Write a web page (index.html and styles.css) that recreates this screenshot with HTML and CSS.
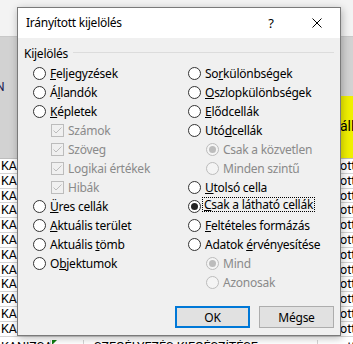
FILE: index.html
```html
<!DOCTYPE html>
<html lang="hu">
<head>
  <meta charset="UTF-8" />
  <title>Irányított kijelölés</title>
  <link rel="stylesheet" href="styles.css">
</head>
<body>
<div class="sheet">
  <div class="ribbon"></div>
  <div class="heading"><span class="heading-left">N</span></div>
  <div class="title-row">
    <span class="title-left"></span>
    <span class="title-right">áll</span>
  </div>
  <div class="row"><span class="c-a">KAN</span><span class="c-b"></span><span class="c-c"></span><span class="c-d">ott</span></div>
  <div class="row"><span class="c-a">KAN</span><span class="c-b"></span><span class="c-c"></span><span class="c-d">ott</span></div>
  <div class="row"><span class="c-a">KAN</span><span class="c-b"></span><span class="c-c"></span><span class="c-d">ott</span></div>
  <div class="row"><span class="c-a">KAN</span><span class="c-b"></span><span class="c-c"></span><span class="c-d">ott</span></div>
  <div class="row"><span class="c-a">KAN</span><span class="c-b"></span><span class="c-c"></span><span class="c-d">ott</span></div>
  <div class="row"><span class="c-a">KAN</span><span class="c-b"></span><span class="c-c"></span><span class="c-d">ott</span></div>
  <div class="row"><span class="c-a">KAN</span><span class="c-b"></span><span class="c-c"></span><span class="c-d">ott</span></div>
  <div class="row"><span class="c-a">KAN</span><span class="c-b"></span><span class="c-c"></span><span class="c-d">ott</span></div>
  <div class="row"><span class="c-a">KAN</span><span class="c-b"></span><span class="c-c"></span><span class="c-d">ott</span></div>
  <div class="row"><span class="c-a">KAN</span><span class="c-b"></span><span class="c-c"></span><span class="c-d">ott</span></div>
  <div class="row"><span class="c-a">KAN</span><span class="c-b"></span><span class="c-c"></span><span class="c-d">ott</span></div>
  <div class="row"><span class="c-a">KAN</span><span class="c-b"></span><span class="c-c"></span><span class="c-d">ott</span></div>
  <div class="row row-last">
    <span class="c-a">KANIZSAI</span>
    <span class="c-b"><span class="flag"></span></span>
    <span class="c-c">SZEGÉLYEZÉS KIEGÉSZÍTÉSE</span>
    <span class="c-d">ott</span>
  </div>
</div>

<div class="dialog" role="dialog" aria-label="Irányított kijelölés">
  <div class="titlebar">
    <span class="title">Irányított kijelölés</span>
    <span class="help">?</span>
    <span class="close">
      <svg width="10" height="10" viewBox="0 0 10 10"><path d="M0.5 0.5 L9.5 9.5 M9.5 0.5 L0.5 9.5" stroke="#000" stroke-width="1" fill="none"/></svg>
    </span>
  </div>
  <div class="dialog-body">
    <div class="legend"><span>Kijelölés</span></div>
    <div class="options">
      <div class="col col-left">
        <div class="opt"><span class="radio"></span><span><u>F</u>eljegyzések</span></div>
        <div class="opt"><span class="radio"></span><span>Á<u>l</u>landók</span></div>
        <div class="opt"><span class="radio"></span><span><u>K</u>épletek</span></div>
        <div class="opt sub disabled"><span class="check"><svg width="11" height="11" viewBox="0 0 11 11"><path d="M1.5 5.5 L4 8 L9.5 2.5" stroke="#bcbcbc" fill="none"/></svg></span><span>Számok</span></div>
        <div class="opt sub disabled"><span class="check"><svg width="11" height="11" viewBox="0 0 11 11"><path d="M1.5 5.5 L4 8 L9.5 2.5" stroke="#bcbcbc" fill="none"/></svg></span><span>Szöveg</span></div>
        <div class="opt sub disabled"><span class="check"><svg width="11" height="11" viewBox="0 0 11 11"><path d="M1.5 5.5 L4 8 L9.5 2.5" stroke="#bcbcbc" fill="none"/></svg></span><span>Logikai értékek</span></div>
        <div class="opt sub disabled"><span class="check"><svg width="11" height="11" viewBox="0 0 11 11"><path d="M1.5 5.5 L4 8 L9.5 2.5" stroke="#bcbcbc" fill="none"/></svg></span><span>Hibák</span></div>
        <div class="opt"><span class="radio"></span><span><u>Ü</u>res cellák</span></div>
        <div class="opt"><span class="radio"></span><span><u>A</u>ktuális terület</span></div>
        <div class="opt"><span class="radio"></span><span>Aktuális <u>t</u>ömb</span></div>
        <div class="opt"><span class="radio"></span><span>O<u>b</u>jektumok</span></div>
      </div>
      <div class="col">
        <div class="opt"><span class="radio"></span><span>So<u>r</u>különbségek</span></div>
        <div class="opt"><span class="radio"></span><span><u>O</u>szlopkülönbségek</span></div>
        <div class="opt"><span class="radio"></span><span><u>E</u>lődcellák</span></div>
        <div class="opt"><span class="radio"></span><span>Utó<u>d</u>cellák</span></div>
        <div class="opt sub disabled"><span class="radio checked"></span><span>Csak a közvetlen</span></div>
        <div class="opt sub disabled"><span class="radio"></span><span>Minden szintű</span></div>
        <div class="opt"><span class="radio"></span><span><u>U</u>tolsó cella</span></div>
        <div class="opt"><span class="radio checked"></span><span class="focus"><u>C</u>sak a látható cellák</span></div>
        <div class="opt"><span class="radio"></span><span><u>F</u>eltételes formázás</span></div>
        <div class="opt"><span class="radio"></span><span>Adatok <u>é</u>rvényesítése</span></div>
        <div class="opt sub disabled"><span class="radio checked"></span><span>Mind</span></div>
        <div class="opt sub disabled"><span class="radio"></span><span>Azonosak</span></div>
      </div>
    </div>
    <div class="buttons">
      <button class="btn btn-default">OK</button>
      <button class="btn">Mégse</button>
    </div>
  </div>
</div>
</body>
</html>
```

FILE: styles.css
```css
* {
  box-sizing: border-box;
}
html, body {
  margin: 0;
}
body {
  width: 353px;
  height: 344px;
  overflow: hidden;
  position: relative;
  background: #fff;
  font-family: Roboto, sans-serif;
}

/* spreadsheet behind the dialog */
.sheet {
  display: flex;
  flex-direction: column;
}
.ribbon {
  height: 37px;
  background: #f3f3f3;
  border-bottom: 1px solid #c8c8c8;
}
.heading {
  height: 59px;
  background: #d2d2d2;
  display: flex;
  align-items: flex-end;
}
.heading-left {
  font-size: 12px;
  color: #1a1a50;
  margin-left: -4px;
  padding-bottom: 2px;
}
.title-row {
  height: 63px;
  display: flex;
  justify-content: space-between;
  border-bottom: 1px solid #bdbdbd;
}
.title-left {
  width: 50px;
  background: #d2d2d2;
}
.title-right {
  width: 36px;
  background: #f0f000;
  padding-left: 23px;
  padding-bottom: 2px;
  display: flex;
  align-items: center;
  font-size: 14px;
  white-space: nowrap;
  overflow: hidden;
  color: #000;
}
.row {
  height: 14.8px;
  display: flex;
  border-bottom: 1px solid #d4d4d4;
  font-size: 12.5px;
  line-height: 14px;
  color: #000;
}
.row span {
  white-space: nowrap;
  overflow: hidden;
}
.c-a {
  width: 50px;
  padding-left: 1px;
}
.c-b {
  width: 33px;
  border-left: 1px solid #d4d4d4;
  position: relative;
}
.c-c {
  flex: 1;
  border-left: 1px solid #d4d4d4;
  padding-left: 10px;
}
.c-d {
  width: 36px;
  border-left: 1px solid #d4d4d4;
  padding-left: 22px;
}
.row-last {
  height: 16px;
  padding-top: 3px;
}
.flag {
  position: absolute;
  left: 1px;
  top: 0;
  width: 0;
  height: 0;
  border-top: 5px solid #107c10;
  border-right: 5px solid transparent;
}

/* dialog */
.dialog {
  position: absolute;
  left: 17px;
  top: 7px;
  width: 324px;
  height: 329px;
  background: #f0f0f0;
  border: 1px solid #7a7a7a;
  box-shadow: 1px 2px 8px rgba(0, 0, 0, 0.28);
  display: flex;
  flex-direction: column;
  font-family: "Noto Sans", sans-serif;
  font-size: 12px;
  letter-spacing: -0.25px;
  color: #000;
}
.titlebar {
  height: 30px;
  background: #fff;
  display: flex;
  align-items: center;
}
.title {
  flex: 1;
  padding-left: 8px;
  padding-bottom: 1px;
}
.help, .close {
  width: 46px;
  height: 30px;
  display: flex;
  align-items: center;
  justify-content: center;
}
.help {
  font-size: 13px;
}
.dialog-body {
  flex: 1;
  display: flex;
  flex-direction: column;
  padding: 7px 6px 7px 6px;
}
.legend {
  height: 16px;
  display: flex;
  align-items: center;
  gap: 5px;
}
.legend::after {
  content: "";
  flex: 1;
  border-top: 1px solid #dcdcdc;
  margin-top: -1px;
}
.options {
  display: flex;
  margin-top: 2.5px;
  padding-left: 9px;
}
.col {
  display: flex;
  flex-direction: column;
}
.col-left {
  width: 155px;
}
.opt {
  height: 19px;
  display: flex;
  align-items: center;
  gap: 4px;
  white-space: nowrap;
}
.opt u {
  text-underline-offset: 1px;
}
.opt.sub {
  padding-left: 18px;
}
.opt.disabled {
  color: #8a8a8a;
}
.radio {
  flex: none;
  width: 13px;
  height: 13px;
  border: 1px solid #333;
  border-radius: 50%;
  background: #fff;
  display: flex;
  align-items: center;
  justify-content: center;
}
.radio.checked::after {
  content: "";
  width: 7px;
  height: 7px;
  border-radius: 50%;
  background: #222;
}
.disabled .radio {
  border-color: #bcbcbc;
  background: #f4f4f4;
}
.disabled .radio.checked::after {
  background: #bcbcbc;
}
.check {
  flex: none;
  width: 13px;
  height: 13px;
  border: 1px solid #bcbcbc;
  display: flex;
}
.focus {
  outline: 1px dotted #000;
  outline-offset: 0;
  padding: 0 1px;
  margin-left: -2px;
  line-height: 13px;
  margin-top: -3px;
}
.buttons {
  margin-top: auto;
  display: flex;
  justify-content: flex-end;
  gap: 9px;
}
.btn {
  width: 75px;
  height: 22px;
  border: 1px solid #adadad;
  background: #e1e1e1;
  font-family: inherit;
  font-size: 12px;
  letter-spacing: -0.25px;
  color: #000;
  padding: 0;
}
.btn-default {
  border: 2px solid #0078d7;
}
```
